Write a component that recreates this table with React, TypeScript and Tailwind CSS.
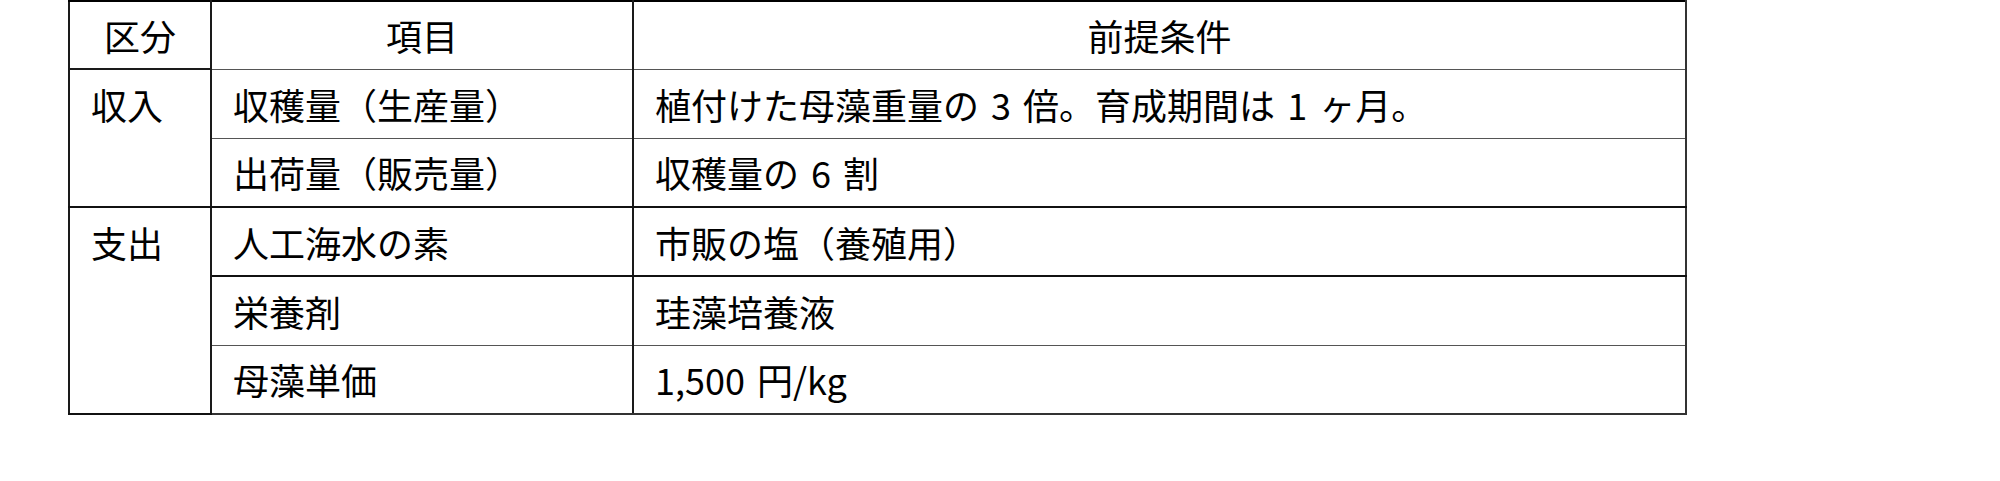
const rows = [
  { group: "収入", item: "収穫量（生産量）", cond: "植付けた母藻重量の 3 倍。育成期間は 1 ヶ月。", first: true, span: 2 },
  { group: "", item: "出荷量（販売量）", cond: "収穫量の 6 割", first: false, span: 0 },
  { group: "支出", item: "人工海水の素", cond: "市販の塩（養殖用）", first: true, span: 3 },
  { group: "", item: "栄養剤", cond: "珪藻培養液", first: false, span: 0 },
  { group: "", item: "母藻単価", cond: "1,500 円/kg", first: false, span: 0 },
];

export default function App() {
  return (
    <div
      className="w-[2000px] h-[481px] bg-white text-black"
      style={{ fontFamily: '"Noto Sans CJK JP", "Noto Sans", sans-serif' }}
    >
      <table className="ml-[68px] w-[1617px] table-fixed border-collapse text-[36px] leading-none [word-spacing:4px]">
        <colgroup>
          <col className="w-[142px]" />
          <col className="w-[422px]" />
          <col className="w-[1053px]" />
        </colgroup>
        <thead>
          <tr className="h-[68px]">
            <th className="border-2 border-b border-[#1a1a1a] border-t-black border-b-[#555] font-normal text-center">区分</th>
            <th className="border-2 border-b border-[#1a1a1a] border-t-black border-b-[#555] font-normal text-center">項目</th>
            <th className="border-2 border-b border-[#1a1a1a] border-t-black border-b-[#555] border-r-[#333] font-normal text-center">前提条件</th>
          </tr>
        </thead>
        <tbody>
          {rows.map((r, i) => {
            const bottom =
              i === 1 || i === 2
                ? "border-b-2 border-b-[#111]"
                : i === 4
                  ? "border-b-2 border-b-[#333]"
                  : "border-b border-b-[#555]";
            return (
              <tr key={i} className="h-[69px]">
                {r.first && (
                  <td rowSpan={r.span} className="border-2 border-[#1a1a1a] border-b-[#111] align-top p-0">
                    <div className="h-[68px] flex items-center pl-[21px]">{r.group}</div>
                  </td>
                )}
                <td className={`border-x-2 border-x-[#1a1a1a] ${bottom} pl-[21px] align-middle`}>{r.item}</td>
                <td className={`border-l-2 border-l-[#1a1a1a] border-r-2 border-r-[#333] ${bottom} pl-[21px] align-middle`}>
                  {r.cond}
                </td>
              </tr>
            );
          })}
        </tbody>
      </table>
    </div>
  );
}
